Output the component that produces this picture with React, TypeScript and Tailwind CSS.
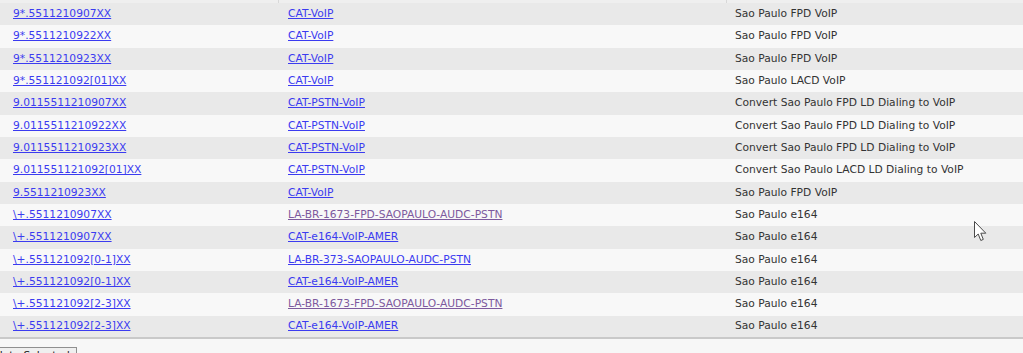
interface Fila {
  patron: string;
  particion: string;
  visitado?: boolean;
  descripcion: string;
}

const filas: Fila[] = [
  { patron: '9*.5511210907XX', particion: 'CAT-VoIP', descripcion: 'Sao Paulo FPD VoIP' },
  { patron: '9*.5511210922XX', particion: 'CAT-VoIP', descripcion: 'Sao Paulo FPD VoIP' },
  { patron: '9*.5511210923XX', particion: 'CAT-VoIP', descripcion: 'Sao Paulo FPD VoIP' },
  { patron: '9*.551121092[01]XX', particion: 'CAT-VoIP', descripcion: 'Sao Paulo LACD VoIP' },
  { patron: '9.0115511210907XX', particion: 'CAT-PSTN-VoIP', descripcion: 'Convert Sao Paulo FPD LD Dialing to VoIP' },
  { patron: '9.0115511210922XX', particion: 'CAT-PSTN-VoIP', descripcion: 'Convert Sao Paulo FPD LD Dialing to VoIP' },
  { patron: '9.0115511210923XX', particion: 'CAT-PSTN-VoIP', descripcion: 'Convert Sao Paulo FPD LD Dialing to VoIP' },
  { patron: '9.011551121092[01]XX', particion: 'CAT-PSTN-VoIP', descripcion: 'Convert Sao Paulo LACD LD Dialing to VoIP' },
  { patron: '9.5511210923XX', particion: 'CAT-VoIP', descripcion: 'Sao Paulo FPD VoIP' },
  { patron: '\\+.5511210907XX', particion: 'LA-BR-1673-FPD-SAOPAULO-AUDC-PSTN', visitado: true, descripcion: 'Sao Paulo e164' },
  { patron: '\\+.5511210907XX', particion: 'CAT-e164-VoIP-AMER', descripcion: 'Sao Paulo e164' },
  { patron: '\\+.551121092[0-1]XX', particion: 'LA-BR-373-SAOPAULO-AUDC-PSTN', descripcion: 'Sao Paulo e164' },
  { patron: '\\+.551121092[0-1]XX', particion: 'CAT-e164-VoIP-AMER', descripcion: 'Sao Paulo e164' },
  { patron: '\\+.551121092[2-3]XX', particion: 'LA-BR-1673-FPD-SAOPAULO-AUDC-PSTN', visitado: true, descripcion: 'Sao Paulo e164' },
  { patron: '\\+.551121092[2-3]XX', particion: 'CAT-e164-VoIP-AMER', descripcion: 'Sao Paulo e164' },
];

const App = () => {
  return (
    <div className="relative h-[353px] w-[1023px] overflow-hidden bg-[#f7f7f7] font-['DejaVu_Sans',sans-serif] text-[10.7px]">
      {/* Restos de la cabecera */}
      <div className="flex h-[3px] bg-[#efefef]">
        <div className="w-[279px] border-r border-[#d8d8d8]"></div>
        <div className="w-[448px] border-r border-[#d8d8d8]"></div>
        <div className="flex-1"></div>
      </div>

      {/* Tabla */}
      <table className="w-full table-fixed border-collapse border-b-2 border-[#c9c9c9]">
        <colgroup>
          <col className="w-[279px]" />
          <col className="w-[448px]" />
          <col />
        </colgroup>
        <tbody>
          {filas.map((f, i) => (
            <tr key={i} className={`h-[22.33px] ${i % 2 === 0 ? 'bg-[#e9e9e9]' : 'bg-[#f8f8f8]'}`}>
              <td className="pl-[13px] align-middle">
                <a href="#" className="text-[#3b3bf0] underline">{f.patron}</a>
              </td>
              <td className="pl-[9px] align-middle">
                <a href="#" className={`underline ${f.visitado ? 'text-[#7d5a9e]' : 'text-[#3b3bf0]'}`}>
                  {f.particion}
                </a>
              </td>
              <td className="pl-[8px] align-middle text-[#333333]">{f.descripcion}</td>
            </tr>
          ))}
        </tbody>
      </table>

      {/* Botón inferior */}
      <div className="pt-[8px]">
        <button className="-ml-[22px] block border border-[#8f8f8f] bg-[#efefef] px-[6px] pt-px pb-[3px] text-[10.7px] leading-[14px] text-[#222]">
          Delete Selected
        </button>
      </div>

      {/* Cursor del ratón */}
      <svg
        className="pointer-events-none absolute left-[974px] top-[221px]"
        width="14"
        height="22"
        viewBox="0 0 14 22"
      >
        <path
          d="M0.5 0.5 L0.5 16.5 L4.2 13 L6.8 19.5 L9.3 18.4 L6.8 12.2 L11.8 12.2 Z"
          fill="#ffffff"
          stroke="#4a4a4a"
          strokeWidth="1"
          strokeLinejoin="miter"
        />
      </svg>
    </div>
  );
};

export default App;
